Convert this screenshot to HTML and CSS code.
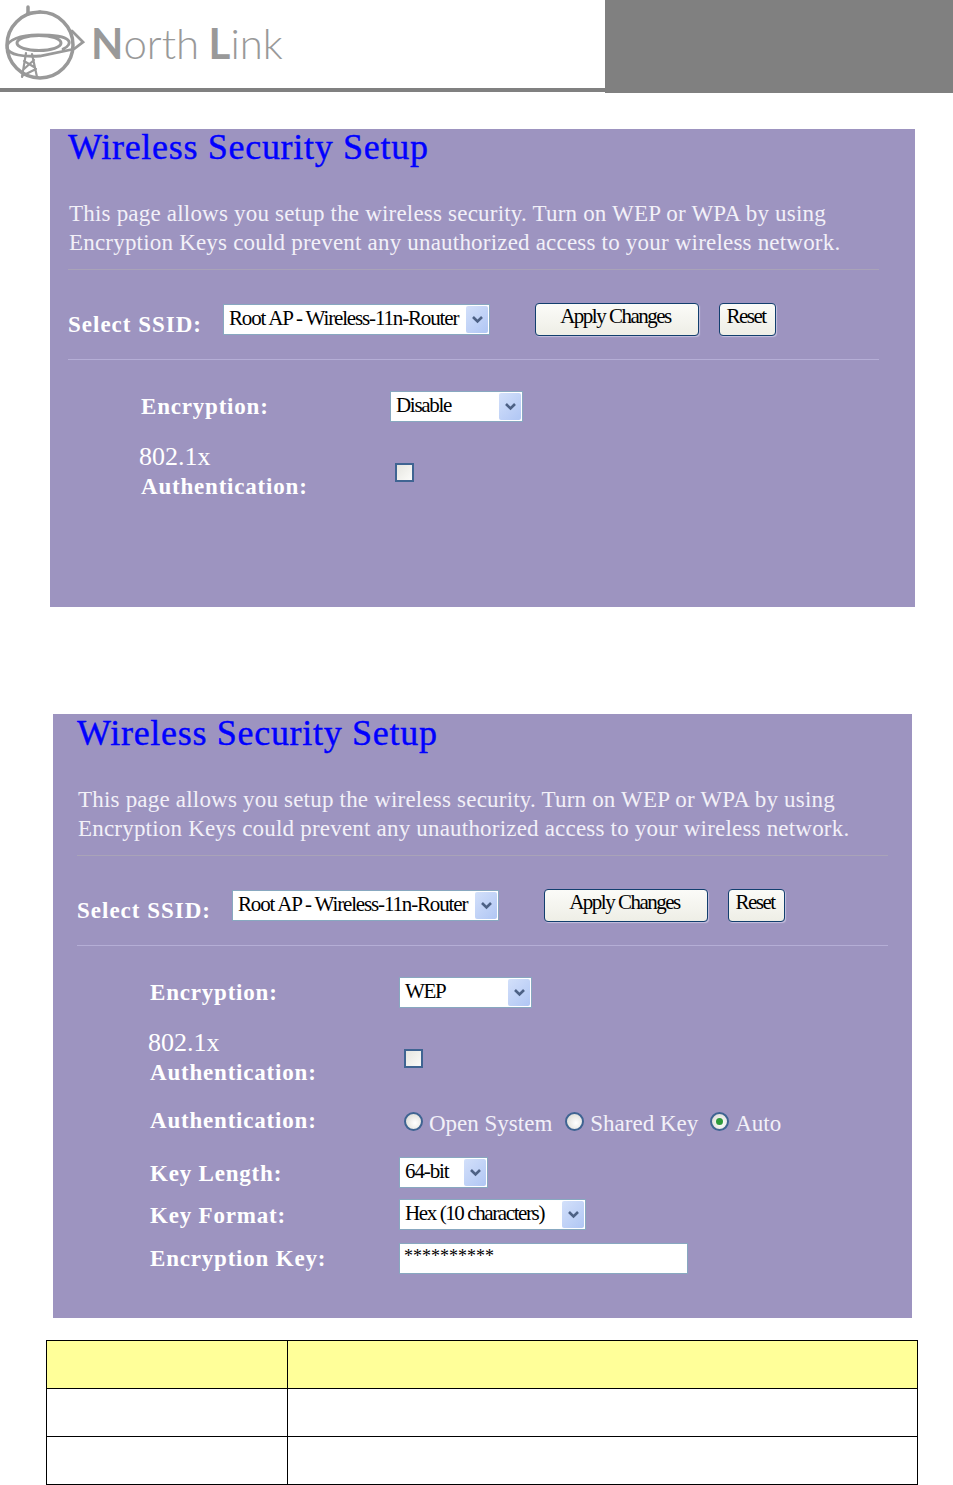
FILE: index.html
```html
<!DOCTYPE html>
<html lang="en">
<head>
  <meta charset="UTF-8">
  <meta name="viewport" content="width=device-width, initial-scale=1.0">
  <title>Wireless Security Setup</title>
  <link rel="stylesheet" href="styles.css">
</head>
<body>
  <header class="page-head">
    <div class="brand">
      <svg class="brand-mark" width="86" height="84" viewBox="0 0 86 84" fill="none" stroke="#999" stroke-linecap="round">
        <circle cx="40" cy="45" r="33" stroke-width="3.5"/>
        <path d="M28 7v7" stroke-width="3.5"/>
        <path d="M28 13c4 0 8 0 12-1" stroke-width="3"/>
        <path d="M72 31l11 11-9 7-34 7c-16 1-31-1-33-8-1-8 14-13 31-13 14 0 26 1 30 5 3 3 0 7-5 9" stroke-width="2.8"/>
        <ellipse cx="39" cy="43" rx="22" ry="7.5" stroke-width="3"/>
        <path d="M26 53l-4 24M32 54l5 23M24 61l10 6M34 60l-10 9M22 76l14-7" stroke-width="2.2"/>
      </svg>
      <div class="brand-name"><b>N</b>orth <b>L</b>ink</div>
    </div>
    <div class="head-block"></div>
  </header>

  <main>
    <section class="panel panel-first">
      <h1>Wireless Security Setup</h1>
      <p class="intro">This page allows you setup the wireless security. Turn on WEP or WPA by using<br>Encryption Keys could prevent any unauthorized access to your wireless network.</p>
      <div class="ssid-row">
        <span class="ssid-label">Select SSID:</span>
        <div class="select select-ssid"><span>Root AP - Wireless-11n-Router</span><i class="arrow"><svg width="13" height="9" viewBox="0 0 13 9"><path d="M2 2l4.5 4.5L11 2" fill="none" stroke="#4d6185" stroke-width="2.6"/></svg></i></div>
        <button class="btn btn-apply">Apply Changes</button>
        <button class="btn btn-reset">Reset</button>
      </div>
      <div class="fields">
        <div class="field field-enc">
          <label>Encryption:</label>
          <div class="select select-enc"><span>Disable</span><i class="arrow"><svg width="13" height="9" viewBox="0 0 13 9"><path d="M2 2l4.5 4.5L11 2" fill="none" stroke="#4d6185" stroke-width="2.6"/></svg></i></div>
        </div>
        <div class="field field-dot1x">
          <label><span class="plain">802.1x</span><br>Authentication:</label>
          <span class="check"></span>
        </div>
      </div>
    </section>

    <section class="panel panel-second">
      <h1>Wireless Security Setup</h1>
      <p class="intro">This page allows you setup the wireless security. Turn on WEP or WPA by using<br>Encryption Keys could prevent any unauthorized access to your wireless network.</p>
      <div class="ssid-row">
        <span class="ssid-label">Select SSID:</span>
        <div class="select select-ssid"><span>Root AP - Wireless-11n-Router</span><i class="arrow"><svg width="13" height="9" viewBox="0 0 13 9"><path d="M2 2l4.5 4.5L11 2" fill="none" stroke="#4d6185" stroke-width="2.6"/></svg></i></div>
        <button class="btn btn-apply">Apply Changes</button>
        <button class="btn btn-reset">Reset</button>
      </div>
      <div class="fields">
        <div class="field field-enc">
          <label>Encryption:</label>
          <div class="select select-enc"><span>WEP</span><i class="arrow"><svg width="13" height="9" viewBox="0 0 13 9"><path d="M2 2l4.5 4.5L11 2" fill="none" stroke="#4d6185" stroke-width="2.6"/></svg></i></div>
        </div>
        <div class="field field-dot1x">
          <label><span class="plain">802.1x</span><br>Authentication:</label>
          <span class="check"></span>
        </div>
        <div class="field field-auth">
          <label>Authentication:</label>
          <div class="radios">
            <span class="radio"></span><span class="radio-text text-open">Open System</span>
            <span class="radio"></span><span class="radio-text text-shared">Shared Key</span>
            <span class="radio radio-on"></span><span class="radio-text">Auto</span>
          </div>
        </div>
        <div class="field field-len">
          <label>Key Length:</label>
          <div class="select select-len"><span>64-bit</span><i class="arrow"><svg width="13" height="9" viewBox="0 0 13 9"><path d="M2 2l4.5 4.5L11 2" fill="none" stroke="#4d6185" stroke-width="2.6"/></svg></i></div>
        </div>
        <div class="field field-format">
          <label>Key Format:</label>
          <div class="select select-format"><span>Hex (10 characters)</span><i class="arrow"><svg width="13" height="9" viewBox="0 0 13 9"><path d="M2 2l4.5 4.5L11 2" fill="none" stroke="#4d6185" stroke-width="2.6"/></svg></i></div>
        </div>
        <div class="field field-key">
          <label>Encryption Key:</label>
          <div class="key-input">**********</div>
        </div>
      </div>
    </section>

    <table class="info">
      <tr class="info-head"><td></td><td></td></tr>
      <tr><td></td><td></td></tr>
      <tr><td></td><td></td></tr>
    </table>
  </main>
</body>
</html>
```

FILE: styles.css
```css
html, body {
  margin: 0;
  padding: 0;
  height: 1485px;
  overflow: hidden;
  background: #fff;
}

body {
  font-family: "Liberation Serif", serif;
}

/* header */
.page-head {
  display: flex;
  height: 93px;
}

.brand {
  width: 605px;
  height: 88px;
  border-bottom: 4px solid #808080;
  display: flex;
  align-items: flex-start;
}

.brand-mark {
  flex: none;
}

.brand-name {
  font-family: Lato, sans-serif;
  font-weight: 300;
  font-size: 42px;
  line-height: 44px;
  color: #999;
  margin: 21px 0 0 5px;
  word-spacing: -2px;
}

.brand-name b {
  font-weight: 700;
}

.head-block {
  flex: 1;
  background: #808080;
}

/* panels */
.panel {
  background: #9d94c0;
  box-sizing: border-box;
  color: #fff;
}

.panel-first {
  width: 865px;
  height: 478px;
  margin: 36px 0 0 50px;
  padding-left: 18px;
}

.panel-second {
  width: 859px;
  height: 604px;
  margin: 107px 0 0 53px;
  padding-left: 24px;
}

h1 {
  margin: 0;
  font-size: 36px;
  line-height: 38px;
  font-weight: normal;
  color: #0000ff;
  letter-spacing: 0.7px;
  -webkit-text-stroke: 0.4px #0000ff;
}

.panel-first h1 {
  line-height: 36px;
}

.intro {
  margin: 33px 0 0;
  width: 811px;
  box-sizing: border-box;
  font-size: 23px;
  line-height: 29px;
  letter-spacing: 0.2px;
  white-space: nowrap;
  color: #f2f0f8;
  padding: 0 0 12px 1px;
  border-bottom: 1px solid #a9a3b8;
}

.panel-first .intro {
  margin-top: 34px;
}

.ssid-row {
  width: 811px;
  height: 90px;
  box-sizing: border-box;
  border-bottom: 1px solid #b5aed6;
  display: flex;
  align-items: flex-start;
  padding-top: 34px;
}

.ssid-label {
  font-weight: bold;
  font-size: 23px;
  line-height: 44px;
  letter-spacing: 1px;
  width: 155px;
  margin-top: -1px;
  flex: none;
}

/* select box */
.select {
  height: 31px;
  box-sizing: border-box;
  background: #fff;
  border: 1px solid #88a8c0;
  color: #000;
  display: flex;
  justify-content: space-between;
  align-items: flex-start;
  font-size: 21px;
  line-height: 26px;
  padding: 1px 1px 1px 5px;
  flex: none;
  white-space: nowrap;
}

.select span {
  margin-top: -1px;
}

.arrow {
  width: 22px;
  height: 27px;
  border-radius: 2px;
  background: linear-gradient(135deg, #d3e0fa, #b0c6f4);
  display: flex;
  align-items: center;
  justify-content: center;
}

.select-ssid {
  width: 267px;
  letter-spacing: -1.15px;
}

.select-enc {
  width: 133px;
  letter-spacing: -1.3px;
}

.select-len {
  width: 89px;
  letter-spacing: -1.1px;
}

.select-format {
  width: 187px;
  letter-spacing: -1.4px;
}

.btn {
  height: 33px;
  margin-top: -1px;
  box-sizing: border-box;
  border: 1px solid #123f6e;
  border-radius: 4px;
  background: linear-gradient(#fbfbf8, #eeeee6);
  box-shadow: 1px 1px 1px #c6c0de;
  font-family: inherit;
  font-size: 21px;
  line-height: 24px;
  letter-spacing: -1.5px;
  color: #000;
  padding: 0 3px 8px 0;
  flex: none;
}

.btn-apply {
  width: 164px;
  margin-left: 45px;
}

.btn-reset {
  width: 57px;
  margin-left: 20px;
}

/* form rows */
.fields {
  padding-left: 73px;
}

.field {
  display: flex;
  align-items: flex-start;
}

.field label {
  width: 249px;
  flex: none;
  font-weight: bold;
  font-size: 23px;
  line-height: 29px;
  letter-spacing: 0.8px;
}

.field-enc {
  margin-top: 31px;
}

.field-enc label {
  padding-top: 1px;
}

.field-dot1x {
  margin-top: 20px;
}

.plain {
  font-weight: normal;
  font-size: 26px;
  margin-left: -2px;
  letter-spacing: 0;
}

.check {
  width: 19px;
  height: 19px;
  box-sizing: border-box;
  border: 2px solid #3f6492;
  background: linear-gradient(135deg, #e6e6e0, #fbfbf9);
  margin: 21px 0 0 5px;
}

.field-auth {
  margin-top: 19px;
}

.radios {
  display: flex;
  align-items: center;
  padding: 3px 0 0 5px;
  font-size: 23px;
  line-height: 29px;
  color: #f2f0f8;
}

.radio {
  width: 19px;
  height: 19px;
  box-sizing: border-box;
  border-radius: 50%;
  border: 2px solid #3f6492;
  background: radial-gradient(circle at 60% 60%, #fff, #d6d6ce);
  margin-right: 6px;
  margin-top: -4px;
  flex: none;
  position: relative;
}

.radio-on::after {
  content: "";
  position: absolute;
  left: 4px;
  top: 4px;
  width: 7px;
  height: 7px;
  border-radius: 50%;
  background: #2d9a3c;
}

.text-open {
  margin-right: 13px;
}

.text-shared {
  margin-right: 12px;
}

.field-len {
  margin-top: 19px;
}

.field-format {
  margin-top: 11px;
}

.field-key {
  margin-top: 13px;
}

.field-len label,
.field-format label {
  padding-top: 2px;
}

.field-key label {
  padding-top: 1px;
}

.key-input {
  width: 289px;
  height: 31px;
  box-sizing: border-box;
  background: #fff;
  border: 1px solid #88a8c0;
  color: #000;
  font-size: 18px;
  line-height: 24px;
  padding-left: 4px;
}

/* table under the panels */
.info {
  border-collapse: collapse;
  table-layout: fixed;
  width: 872px;
  margin: 22px 0 0 46px;
}

.info td {
  height: 47px;
  border: 1px solid #000;
  padding: 0;
}

.info td:first-child {
  width: 240px;
}

.info-head td {
  background: #ffff99;
}
```
